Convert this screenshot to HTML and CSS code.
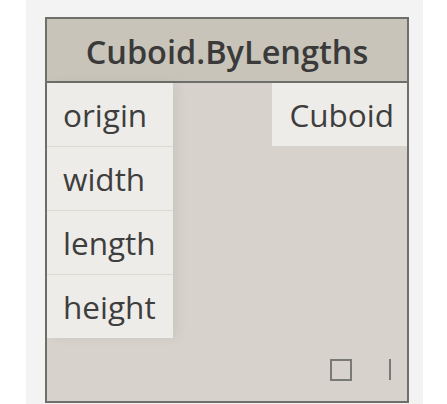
FILE: index.html
```html
<!DOCTYPE html>
<html>
  <head>
    <title>Cuboid.ByLengths</title>
    <link rel="stylesheet" href="styles.css">
  </head>
  <body>
    <div class="canvas">
      <div class="node">
        <div class="node-header">Cuboid.ByLengths</div>
        <div class="node-body">
          <div class="inputs">
            <div class="port">origin</div>
            <div class="port">width</div>
            <div class="port">length</div>
            <div class="port">height</div>
          </div>
          <div class="outputs">
            <div class="port out">Cuboid</div>
          </div>
        </div>
        <div class="node-footer">
          <span class="preview-box"></span>
          <span class="lacing"></span>
        </div>
      </div>
    </div>
  </body>
</html>
```

FILE: styles.css
```css
body {
  margin: 0;
  background-color: #fff;
  font-family: "Open Sans", "Noto Sans", sans-serif;
  color: #3e3e3e;
}

.canvas {
  margin-left: 26px;
  width: 397px;
  height: 404px;
  box-sizing: border-box;
  padding: 17px 14px 0 19px;
  background-color: #f3f3f3;
}

.node {
  width: 364px;
  height: 386px;
  box-sizing: border-box;
  border: 2px solid #6e6e6a;
  background-color: #d7d3cc;
  display: flex;
  flex-direction: column;
}

.node-header {
  height: 62px;
  border-bottom: 2px solid #6e6e6a;
  background-color: #c9c4b9;
  font-size: 32.5px;
  font-weight: 600;
  line-height: 65px;
  text-align: center;
  color: #3a3a3a;
}

.node-body {
  display: flex;
  justify-content: space-between;
}

.inputs {
  width: 126px;
  background-color: #eeece8;
  box-shadow: 5px 0 10px rgba(0, 0, 0, 0.06);
}

.port {
  height: 63px;
  border-bottom: 1px solid #dcd9d3;
  padding-left: 16px;
  font-size: 31.5px;
  line-height: 64px;
  background-color: #eeece8;
}

.inputs .port:last-child {
  border-bottom: none;
}

.outputs {
  width: 135px;
}

.port.out {
  border-bottom: none;
  padding-left: 0;
  padding-right: 13px;
  text-align: right;
}

.node-footer {
  flex: 1;
  display: flex;
  align-items: center;
  justify-content: flex-end;
  gap: 37px;
  padding: 0 16px 0 0;
}

.preview-box {
  width: 18px;
  height: 18px;
  border: 2px solid #7a7a74;
}

.lacing {
  width: 2px;
  height: 21px;
  background-color: #7a7a74;
}
```
